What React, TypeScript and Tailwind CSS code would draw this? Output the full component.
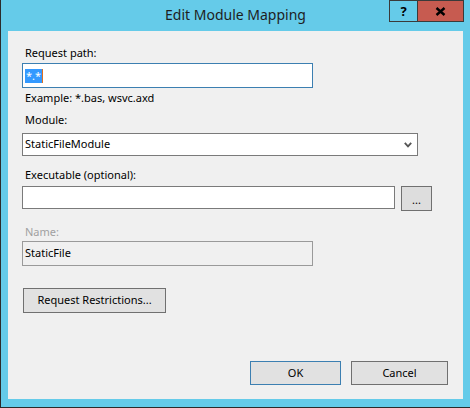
export default function App() {
  const font = { fontFamily: '"Noto Sans", "Liberation Sans", sans-serif' };
  return (
    <div
      className="w-[470px] h-[408px] bg-[#65cbe9] border-l border-b border-[#2b2b2b] flex flex-col text-[11px] text-black"
      style={font}
    >
      <div className="relative h-[31px] flex justify-center items-start">
        <span className="mt-[5px] text-[14px] leading-[20px] text-[#1e1e1e]">Edit Module Mapping</span>
        <div className="absolute right-[6px] top-0 flex">
          <div className="w-[29px] h-[22px] border border-[#3a3a3a] flex items-center justify-center font-bold text-[13px] leading-none text-black">
            ?
          </div>
          <div className="w-[46px] h-[22px] bg-[#c75b50] border border-l-0 border-[#3a3a3a] flex items-center justify-center">
            <svg width="11" height="9" viewBox="0 0 11 9">
              <path d="M1.5 1 L9.5 8 M9.5 1 L1.5 8" stroke="#000" strokeWidth="2.4" />
            </svg>
          </div>
        </div>
      </div>
      <div className="ml-[7px] mr-[7px] h-[368px] bg-[#f0f0f0] flex flex-col">
        <div className="mt-[14px] h-[16px] leading-[16px] pl-[17px]">Request path:</div>
        <div className="mt-[2px] ml-[14px] w-[291px] h-[25px] bg-white border border-[#3c7fb1] flex items-center pl-[2px]">
          <span className="bg-[#3399ff] text-white h-[14px] leading-[14px] px-[1px]">*.*</span>
          <span className="w-[1px] h-[14px] bg-[#e07020]" />
        </div>
        <div className="mt-[2px] h-[16px] leading-[16px] pl-[17px]">Example: *.bas, wsvc.axd</div>
        <div className="mt-[6px] h-[16px] leading-[16px] pl-[17px]">Module:</div>
        <div className="mt-[5px] ml-[14px] w-[396px] h-[23px] bg-white border border-[#7a7a7a] flex items-center justify-between pl-[2px] pr-[5px]">
          <span>StaticFileModule</span>
          <svg width="8" height="6" viewBox="0 0 8 6">
            <path d="M0.8 0.8 L4 4.4 L7.2 0.8" stroke="#555" strokeWidth="1.8" fill="none" />
          </svg>
        </div>
        <div className="mt-[11px] h-[16px] leading-[16px] pl-[17px]">Executable (optional):</div>
        <div className="mt-[3px] ml-[14px] flex items-start gap-[6px]">
          <div className="w-[373px] h-[23px] bg-white border border-[#7a7a7a]" />
          <div className="w-[31px] h-[25px] bg-[#dddddd] border border-[#707070] flex items-center justify-center leading-none pt-[2px]">
            ...
          </div>
        </div>
        <div className="mt-[13px] h-[16px] leading-[16px] pl-[17px] text-[#a0a0a0]">Name:</div>
        <div className="mt-[1px] ml-[14px] w-[291px] h-[25px] border border-[#9a9a9a] flex items-center pl-[2px]">
          StaticFile
        </div>
        <div className="mt-[22px] ml-[15px] w-[143px] h-[25px] bg-[#e1e1e1] border border-[#707070] flex items-center justify-center">
          Request Restrictions...
        </div>
        <div className="mt-[48px] flex justify-end gap-[10px] pr-[15px]">
          <div className="w-[91px] h-[24px] bg-[#e1e1e1] border border-[#3c7fb1] flex items-center justify-center">
            OK
          </div>
          <div className="w-[97px] h-[24px] bg-[#e1e1e1] border border-[#707070] flex items-center justify-center">
            Cancel
          </div>
        </div>
      </div>
    </div>
  );
}
